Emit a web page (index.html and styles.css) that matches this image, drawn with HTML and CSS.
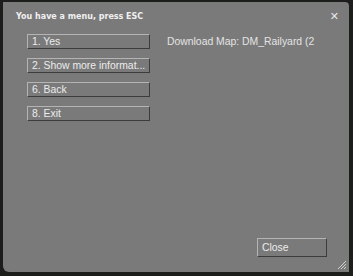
FILE: index.html
```html
<!DOCTYPE html>
<html lang="en">
<head>
    <meta charset="UTF-8">
    <title>Menu</title>
    <link rel="stylesheet" href="styles.css">
</head>
<body>
    <div class="window">
        <div class="titlebar">
            <span class="title">You have a menu, press ESC</span>
            <span class="close-x">&#x2715;</span>
        </div>
        <div class="content">
            <div class="options">
                <div class="option">1. Yes</div>
                <div class="option">2. Show more informat...</div>
                <div class="option">6. Back</div>
                <div class="option">8. Exit</div>
            </div>
            <div class="message">Download Map: DM_Railyard (2</div>
        </div>
        <div class="footer">
            <div class="option close-btn">Close</div>
        </div>
        <svg class="grip" width="10" height="10" viewBox="0 0 10 10">
            <path d="M9 1 L1 9 M9 4 L4 9 M9 7 L7 9" stroke="#d0d0d0" stroke-width="1"/>
        </svg>
    </div>
</body>
</html>
```

FILE: styles.css
```css
body {
    margin: 0;
    background-color: #1b1e1b;
    font-family: "DejaVu Sans", sans-serif;
}
.window {
    position: relative;
    margin: 2px 4px 0 3px;
    height: 270px;
    background-color: #7a7a7a;
    border-radius: 0 4px 0 6px;
    box-sizing: border-box;
    display: flex;
    flex-direction: column;
}
.titlebar {
    display: flex;
    justify-content: space-between;
    align-items: center;
    padding: 7px 10px 0 13px;
    height: 14px;
}
.title {
    color: #f0f0f0;
    font-size: 8px;
    font-weight: bold;
}
.close-x {
    color: #e6e6e6;
    font-size: 11px;
    font-weight: bold;
}
.content {
    display: flex;
    padding: 11px 0 0 24px;
    gap: 17px;
}
.options {
    display: flex;
    flex-direction: column;
    gap: 9px;
}
.option {
    width: 117px;
    height: 11px;
    padding: 1px 0 1px 4px;
    border-top: 1px solid #b4b4b4;
    border-left: 1px solid #b4b4b4;
    border-bottom: 1px solid #3c3c3c;
    border-right: 1px solid #3c3c3c;
    color: #ececec;
    font-family: "Liberation Sans", Arial, sans-serif;
    font-size: 10.4px;
    line-height: 12px;
    white-space: nowrap;
}
.message {
    color: #e4e4e4;
    font-family: "Liberation Sans", Arial, sans-serif;
    font-size: 10.4px;
    line-height: 12px;
    padding-top: 2px;
}
.footer {
    margin-top: auto;
    display: flex;
    justify-content: flex-end;
    padding: 0 22px 15px 0;
}
.close-btn {
    width: 64px;
    height: 15px;
    line-height: 15px;
}
.grip {
    position: absolute;
    right: 2px;
    bottom: 2px;
}
```
